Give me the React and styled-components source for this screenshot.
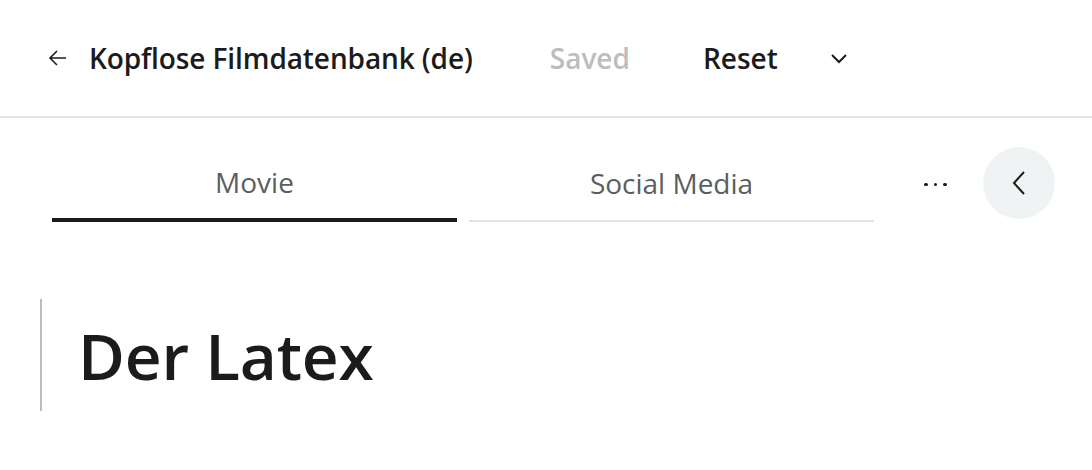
import React from 'react';
import styled, { createGlobalStyle } from 'styled-components';

const GlobalStyle = createGlobalStyle`
  html, body {
    margin: 0;
    padding: 0;
    background: #ffffff;
    font-family: "Open Sans", "Noto Sans", sans-serif;
    color: #1b1b1b;
  }
`;

const Page = styled.div`
  width: 1092px;
  min-height: 470px;
  display: flex;
  flex-direction: column;
`;

const Header = styled.header`
  height: 118px;
  border-bottom: 2px solid #dfe3e3;
  display: flex;
  align-items: center;
  padding-left: 46px;
  box-sizing: border-box;
`;

const IconButton = styled.button`
  border: none;
  background: ${p => (p.$filled ? '#f0f3f4' : 'transparent')};
  width: ${p => p.$size || 24}px;
  height: ${p => p.$size || 24}px;
  flex-shrink: 0;
  border-radius: 50%;
  padding: 0;
  display: flex;
  align-items: center;
  justify-content: center;
  color: #1b1b1b;
  cursor: pointer;
`;

const Title = styled.h1`
  margin: 0 0 0 19px;
  font-size: 28px;
  font-weight: 600;
  letter-spacing: -0.1px;
`;

const Action = styled.span`
  font-size: 28px;
  font-weight: 600;
  color: ${p => (p.$muted ? '#bdbdbd' : '#1b1b1b')};
  margin-left: ${p => p.$gap}px;
`;

const TabBar = styled.div`
  display: flex;
  align-items: flex-start;
  padding: 29px 38px 0 52px;
`;

const Tabs = styled.div`
  display: flex;
  gap: 12px;
`;

const Tab = styled.div`
  width: 405px;
  height: 75px;
  box-sizing: border-box;
  display: flex;
  align-items: center;
  justify-content: center;
  padding-bottom: 2px;
  font-size: 28px;
  font-weight: ${p => (p.$active ? 500 : 400)};
  color: #5b5e5e;
  border-bottom: ${p => (p.$active ? '4px solid #1b1b1b' : '2px solid #dfe3e3')};
  margin-bottom: ${p => (p.$active ? 0 : 1)}px;
`;

const More = styled.div`
  height: 75px;
  display: flex;
  align-items: center;
  gap: 6px;
  margin-left: 50px;
  margin-right: 36px;
`;

const Dot = styled.span`
  width: 3.5px;
  height: 3.5px;
  border-radius: 50%;
  background: #1b1b1b;
`;

const Content = styled.section`
  margin: 76px 0 0 40px;
  border-left: 2px solid #bdbdbd;
  height: 112px;
  display: flex;
  align-items: center;
  padding-left: 36px;
`;

const Heading = styled.h2`
  margin: 0;
  font-size: 64px;
  font-weight: 600;
  letter-spacing: -0.2px;
  color: #1b1b1b;
`;

const ArrowLeft = () => (
  <svg width="22" height="22" viewBox="0 0 22 22" fill="none" stroke="currentColor" strokeWidth="1.6">
    <path d="M19 11H3M10 4L3 11l7 7" />
  </svg>
);

const ChevronDown = () => (
  <svg width="18" height="12" viewBox="0 0 18 12" fill="none" stroke="currentColor" strokeWidth="2">
    <path d="M2 3l7 7 7-7" />
  </svg>
);

const ChevronLeft = () => (
  <svg width="14" height="26" viewBox="0 0 14 26" fill="none" stroke="currentColor" strokeWidth="2">
    <path d="M12 2L2 13l10 11" />
  </svg>
);

export default function App() {
  return (
    <Page>
      <GlobalStyle />
      <Header>
        <IconButton>
          <ArrowLeft />
        </IconButton>
        <Title>Kopflose Filmdatenbank (de)</Title>
        <Action $muted $gap={77}>Saved</Action>
        <Action $gap={73}>Reset</Action>
        <IconButton $size={30} style={{ marginLeft: 46 }}>
          <ChevronDown />
        </IconButton>
      </Header>
      <TabBar>
        <Tabs>
          <Tab $active>Movie</Tab>
          <Tab>Social Media</Tab>
        </Tabs>
        <More>
          <Dot />
          <Dot />
          <Dot />
        </More>
        <IconButton $filled $size={72}>
          <ChevronLeft />
        </IconButton>
      </TabBar>
      <Content>
        <Heading>Der Latex</Heading>
      </Content>
    </Page>
  );
}
